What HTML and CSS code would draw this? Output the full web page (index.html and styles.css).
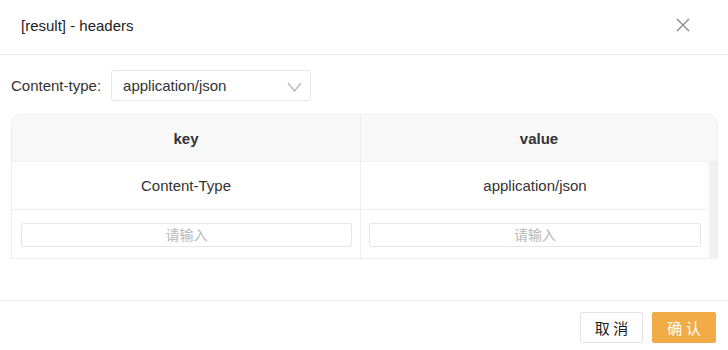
FILE: index.html
```html
<!DOCTYPE html>
<html lang="zh">
<head>
    <meta charset="UTF-8">
    <title>[result] - headers</title>
    <link rel="stylesheet" href="styles.css">
</head>
<body>
    <div class="modal">
        <div class="modal-header">
            <span class="modal-title">[result] - headers</span>
            <svg class="close-icon" width="14" height="14" viewBox="0 0 14 14">
                <path d="M1 1 L13 13 M13 1 L1 13" stroke="#8a8a8a" stroke-width="1.3" fill="none"/>
            </svg>
        </div>
        <div class="modal-body">
            <div class="type-row">
                <span class="type-label">Content-type:</span>
                <div class="select">
                    <span>application/json</span>
                    <svg class="chevron" width="15" height="10" viewBox="0 0 15 10">
                        <path d="M1 1 L7.5 9 L14 1" stroke="#b5b5b5" stroke-width="1.2" fill="none"/>
                    </svg>
                </div>
            </div>
            <div class="kv-table">
                <div class="kv-head">
                    <div class="cell">key</div>
                    <div class="cell">value</div>
                </div>
                <div class="kv-body">
                    <div class="kv-rows">
                        <div class="kv-row">
                            <div class="cell">Content-Type</div>
                            <div class="cell">application/json</div>
                        </div>
                        <div class="kv-row input-row">
                            <div class="cell"><input class="kv-input" placeholder="请输入"></div>
                            <div class="cell"><input class="kv-input" placeholder="请输入"></div>
                        </div>
                    </div>
                    <div class="scrollbar"></div>
                </div>
            </div>
        </div>
        <div class="modal-footer">
            <button class="btn btn-cancel">取 消</button>
            <button class="btn btn-ok">确 认</button>
        </div>
    </div>
</body>
</html>
```
FILE: styles.css
```css
body {
    margin: 0;
    font-family: "Liberation Sans", "Noto Sans CJK SC", sans-serif;
    color: #333;
    background: #fff;
}
.modal {
    width: 728px;
    height: 350px;
}
.modal-header {
    height: 55px;
    border-bottom: 1px solid #e9e9e9;
    display: flex;
    align-items: center;
    justify-content: space-between;
    padding: 0 38px 4px 21px;
    box-sizing: border-box;
}
.modal-title {
    font-size: 15px;
    color: #222;
}
.close-icon {
    display: block;
}
.modal-body {
    padding: 15px 10px 0 11px;
    height: 245px;
    box-sizing: border-box;
}
.type-row {
    display: flex;
    align-items: center;
    gap: 10px;
}
.type-label {
    font-size: 15px;
    color: #333;
}
.select {
    width: 200px;
    height: 31px;
    box-sizing: border-box;
    border: 1px solid #e6e6e6;
    border-radius: 3px;
    display: flex;
    align-items: center;
    justify-content: space-between;
    padding: 0 8px 0 11px;
    font-size: 15px;
    color: #333;
}
.chevron {
    display: block;
    margin-top: 3px;
}
.kv-table {
    margin-top: 13px;
    width: 707px;
    border: 1px solid #eeeeee;
    border-bottom: none;
    border-radius: 10px 10px 0 0;
    overflow: hidden;
    box-sizing: border-box;
}
.kv-head {
    display: grid;
    grid-template-columns: 349px 1fr;
    height: 46px;
    background: #f8f8f8;
    border-bottom: 1px solid #eeeeee;
    font-weight: 700;
}
.cell {
    display: flex;
    align-items: center;
    justify-content: center;
    font-size: 15px;
}
.kv-head .cell:first-child,
.kv-row .cell:first-child {
    border-right: 1px solid #eeeeee;
}
.kv-body {
    display: flex;
}
.kv-rows {
    flex: 1;
}
.kv-row {
    display: grid;
    grid-template-columns: 349px 1fr;
    height: 47px;
    border-bottom: 1px solid #eeeeee;
}
.input-row {
    height: 48px;
}
.input-row .cell {
    padding: 0 8px 0 9px;
}
.input-row .cell:last-child {
    padding: 0 8px 0 8px;
}
.kv-input {
    width: 100%;
    height: 24px;
    box-sizing: border-box;
    border: 1px solid #e6e6e6;
    border-radius: 2px;
    text-align: center;
    font-family: "Liberation Sans", "Noto Sans CJK SC", sans-serif;
    font-size: 14px;
    outline: none;
    margin-top: 1px;
}
.kv-input::placeholder {
    color: #b8b8b8;
}
.scrollbar {
    width: 8px;
    background: #f1f1f1;
}
.modal-footer {
    border-top: 1px solid #eeeeee;
    height: 49px;
    display: flex;
    justify-content: flex-end;
    align-items: flex-start;
    gap: 9px;
    padding: 11px 12px 0 0;
    box-sizing: border-box;
}
.btn {
    height: 31px;
    width: 63px;
    border-radius: 2px;
    font-family: "Noto Sans CJK SC", sans-serif;
    font-size: 15px;
    cursor: pointer;
    padding: 0;
}
.btn-cancel {
    background: #fff;
    border: 1px solid #e3e3e3;
    color: #222;
}
.btn-ok {
    width: 64px;
    background: #f2ac47;
    border: 1px solid #f2ac47;
    color: #fff;
}
```
